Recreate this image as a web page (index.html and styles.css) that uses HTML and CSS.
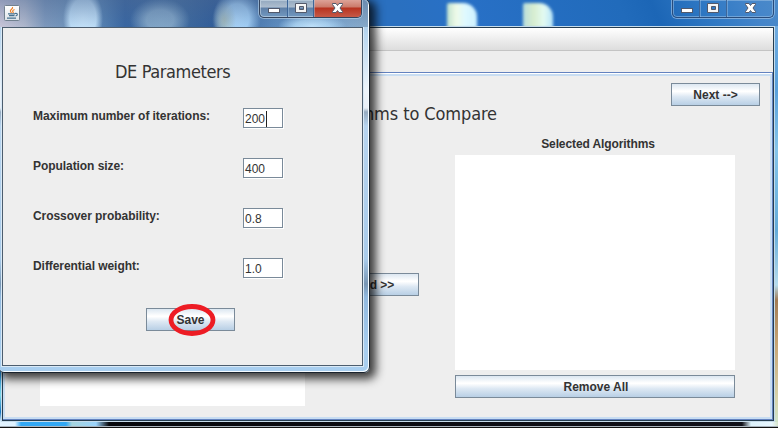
FILE: index.html
```
<!DOCTYPE html>
<html lang="en">
<head>
<meta charset="utf-8">
<title>DE Parameters</title>
<link rel="stylesheet" href="styles.css">
</head>
<body>
<main class="desktop">
  <section class="window main-window">
    <header class="titlebar">
      <i class="glow glow-a"></i><i class="glow glow-b"></i>
      <div class="controls">
        <span><svg width="26" height="17"><rect x="8.5" y="8.5" width="11" height="4" fill="#fff" stroke="#52596b"/></svg></span>
        <span><svg width="26" height="17"><path d="M7.500 3.500h11v9h-11zM11.500 6.500v3h4v-3z" fill="#f5f5f5" fill-rule="evenodd" stroke="#52596b"/></svg></span>
        <span><svg width="46" height="17"><path d="M18.500 3.500h3.500l1.500 2 1.500-2h3.500v1l-2.500 3.500 2.500 3.500v1H25l-1.500-2-1.500 2h-3.500v-1L21 8l-2.500-3.500z" fill="#fff" stroke="#52596b"/></svg></span>
      </div>
    </header>
    <div class="client">
      <div class="menubar"></div>
      <div class="tabstrip"></div>
      <div class="content">
        <div class="left-column"><div class="list left-list"></div></div>
        <div class="middle-column">
          <h1 class="heading compare">Algorithms to Compare</h1>
          <button class="button add">Add &gt;&gt;</button>
        </div>
        <div class="right-column">
          <button class="button next">Next --&gt;</button>
          <div class="list-title">Selected Algorithms</div>
          <div class="list selected"></div>
          <button class="button remove">Remove All</button>
        </div>
      </div>
    </div>
  </section>

  <section class="window dialog">
    <header class="titlebar">
      <svg class="java" width="16" height="16" viewBox="0 0 16 16">
        <defs><linearGradient id="g" x2="0" y2="1"><stop stop-color="#fff"/><stop offset="1" stop-color="#dce3e8"/></linearGradient></defs>
        <rect x=".5" y=".5" width="15" height="15" rx="1" fill="url(#g)" stroke="#72818f"/>
        <path d="M8.500 2c1 2-3 2.500-2 4.500l1 1.500M10.500 4.500c-2 1-2.500 1.500-1 3.500" fill="none" stroke="#f08024" stroke-width="1.200"/>
        <path d="M4 8.800h7M5 10.700h5.500M3 13.200h9M11 8.500c3-.7 3 2 .5 2.500" fill="none" stroke="#46718e" stroke-width="1.200"/>
      </svg>
      <div class="controls">
        <span><svg width="27" height="17"><rect x="8.500" y="8.500" width="11" height="4" fill="#fff" stroke="#52596b"/></svg></span>
        <span><svg width="26" height="17"><path d="M7.500 3.500h11v9h-11zM11.500 6.500v3h4v-3z" fill="#f5f5f5" fill-rule="evenodd" stroke="#52596b"/></svg></span>
        <span class="close"><svg width="47" height="17"><path d="M18.500 3.500h3.500l1.500 2 1.500-2h3.500v1l-2.500 3.500 2.500 3.500v1H25l-1.500-2-1.500 2h-3.500v-1L21 8l-2.500-3.500z" fill="#fff" stroke="#52596b"/></svg></span>
      </div>
    </header>
    <div class="client">
      <h1 class="heading">DE Parameters</h1>
      <form class="form">
        <label>Maximum number of iterations:</label><div class="field">200<i class="caret"></i></div>
        <label>Population size:</label><div class="field">400</div>
        <label>Crossover probability:</label><div class="field">0.8</div>
        <label>Differential weight:</label><div class="field">1.0</div>
      </form>
      <button class="button save">Save
        <svg class="ring" width="48" height="34"><ellipse cx="24" cy="17" rx="21" ry="13.500" fill="none" stroke="#ed1c24" stroke-width="4.800"/></svg>
      </button>
    </div>
  </section>
</main>
</body>
</html>
```

FILE: styles.css
```
* { box-sizing: border-box; }
body { margin: 0; overflow: hidden; font: bold 12px "Liberation Sans", Arial, sans-serif; color: #333; }
.desktop { position: relative; width: 778px; height: 428px; overflow: hidden; background: #0a0b10; }
.window { position: absolute; display: flex; flex-direction: column; }
.titlebar { position: relative; display: flex; flex: none; }
.controls { display: flex; height: 18px; border: 1px solid #294c7c; border-top: 0; border-radius: 0 0 5px 5px; box-shadow: 0 0 0 1px #a6c8e8a0, inset 0 0 0 1px #a6c8e880; }
.controls span { display: block; height: 17px; overflow: hidden; }
.controls span + span { border-left: 1px solid #3d6699; box-shadow: inset 1px 0 #a6c8e870; }
.controls svg { display: block; }

.main-window {
  left: 0; top: 0; width: 778px; height: 428px; padding: 0 4px 7px 2px;
  background:
    linear-gradient(#111, #111) 0 427px / 100% 1px no-repeat,
    linear-gradient(#aab4bd, #aab4bd) 0 426px / 100% 1px no-repeat,
    linear-gradient(90deg, #e3f4ff 0, #dff2ff 15px, #32a8f4 21px, #32a8f4 66px, #a6d4dd 72px, #9ad3fb 96px, #07080c 109px, #111119 742px, #ddf2fb 751px, #e8f7ff 772px, #d7e5cb 778px) 0 422px / 100% 4px no-repeat,
    linear-gradient(#78aee0 0, #58a0db 90px, #85c5ea 150px, #63abd9 230px, #b5dced 285px, #a37c55 300px, #c9a675 345px, #d8d5ad 400px, #cce6d1 428px) 774px 0 / 4px 100% no-repeat,
    linear-gradient(#82b9dd, #278ed4 375px, #79d9eb 395px, #1675c1 412px, #e3f4ff 422px) 0 0 / 2px 100% no-repeat,
    #b9c5d0;
}
.main-window .titlebar {
  height: 26px; margin: 0 -4px 0 -2px; padding-right: 4px; justify-content: flex-end;
  background: linear-gradient(65deg, #2a70c0 370px, #2870c6 430px, #216bbb 570px, #1c66b6 600px, #3079c4 650px, #4485ca 690px, #4b8ac9);
}
.glow { position: absolute; top: 3px; width: 30px; height: 25px; border-radius: 2px 14px 0 0; filter: blur(1.5px); background: linear-gradient(90deg, #bfe1cf, #eefae7 30%, #dff9ff 60%, #cdf0ff); }
.glow-a { left: 447px; }
.glow-b { left: 523px; background: linear-gradient(90deg, #b9dddc, #d7edcf 35%, #e3fbf2 70%, #b4e3f9); }
.main-window .client { position: relative; flex: 1; display: flex; flex-direction: column; margin-top: 1px; border: 1px solid #263d50; background: #eee; box-shadow: 0 0 0 1px #c6dceb; }
.menubar { height: 22px; background: linear-gradient(#fff, #ddd); }
.tabstrip { height: 22px; border-top: 1px solid #c4c4c4; background: #eee; }
.content { flex: 1; display: grid; grid-template-columns: 302px 113px 1fr; border: solid #6382bf; border-width: 1px 1px 1px 0; box-shadow: inset 0 1px #fff, inset 0 3px #c8ddf2, inset -2px 0 #c8ddf2, inset 2px -2px #c8ddf2; }
.left-column { display: flex; align-items: flex-end; padding: 0 0 13px 37px; }
.list { background: #fff; }
.left-list { width: 265px; height: 150px; }
.heading { margin: 0; font: 18px/24px "DejaVu Sans Condensed", "Noto Sans", sans-serif; font-stretch: condensed; white-space: nowrap; letter-spacing: -0.4px; }
.middle-column { display: flex; flex-direction: column; align-items: flex-end; }
.compare { margin: 29px -79px 0 0; letter-spacing: -0.1px; }
.button { display: block; height: 23px; padding: 0; border: 1px solid #7a8a99; color: #333; font: bold 12px/20px "Liberation Sans", Arial, sans-serif; text-align: center; background: linear-gradient(#dce7f1 0, #fff 33%, #fff 36%, #dde8f3 60%, #b8cfe5); }
.add { width: 90px; margin: 147px -1px 0 0; }
.right-column { display: flex; flex-direction: column; width: 280px; margin-left: 37px; }
.next { width: 89px; margin: 10px -25px 0 auto; }
.list-title { margin-top: 30px; height: 19px; line-height: 17px; padding-left: 6px; text-align: center; letter-spacing: -0.1px; }
.selected { height: 215px; }
.remove { width: 280px; margin-top: 5px; padding-left: 2px; }

.dialog {
  left: -2px; top: -2px; width: 372px; height: 375px; padding: 1px 6px 6px 3px;
  border: 1px solid #19232e; border-radius: 7px 7px 6px 6px;
  background: linear-gradient(#93b4d4 0, #b8d6ef 35px, #ecf4fb 90px, #e8eff7 109px, #96abc0 113px, #b7d4ef 127px, #a9cbea 260px, #7896b4 285px, #91b9df 298px, #a8ceef 350px);
  box-shadow: inset -1px -1px #f5fbff, 4px 4px 10px 2px #000000c0;
}
.dialog .titlebar {
  height: 27px; margin: 0 -5px 0 -2px; padding: 0 5px 0 4px; justify-content: space-between; border-radius: 0 5px 0 0;
  background:
    linear-gradient(#49659070, transparent),
    radial-gradient(20px 30px at 83px 18px, #c4e1f8 0, #bcdcf6 65%, transparent),
    radial-gradient(30px 22px at 160px 20px, #82a6c7 0, #7fa3c5 45%, transparent),
    radial-gradient(12px 20px at 224px 20px, #a0b7ba, transparent),
    radial-gradient(24px 28px at 237px 18px, #a8d2f6 0, #a0cdf4 50%, transparent),
    radial-gradient(34px 12px at 312px 26px, #bee1fb 0, #a6cfef 50%, transparent),
    linear-gradient(90deg, #c8c5d8, #aeb7cc 25px, #7d98bc 45px, #638eb9 90px, #3966a1 125px, #426d9f 175px, #315d99 215px, #5b8abd 275px, #7da8d2 330px, #87a9c8);
}
.java { margin-top: 5px; }
.dialog .controls { width: 103px; margin-right: 1px; background: linear-gradient(#92a8bf 0, #adbdce 7px, #5f80a7 8px, #7198c0); border-color: #34445d; box-shadow: 0 0 0 1px #c2d9ec90, inset 0 0 0 1px #d7e6f080; }
.dialog .controls .close { background: linear-gradient(#dda297 0, #cb7b6b 7px, #b73320 8px, #c65947); border-radius: 0 0 4px; }
.dialog .client { flex: 1; display: flex; flex-direction: column; align-items: flex-start; border: 1px solid #4c5d6e; box-shadow: 0 0 0 1px #d9e9f6; background: #eee; padding: 32px 0 0 30px; }
.dialog .heading { margin-left: 82px; }
.form { display: grid; grid-template-columns: 210px 40px; grid-auto-rows: 20px; row-gap: 30px; margin-top: 24px; }
.form label { line-height: 16px; white-space: nowrap; letter-spacing: -0.06px; }
.field { height: 20px; border: 1px solid #7a8a99; padding-left: 1px; background: #fff; box-shadow: 1px 1px #fff; font-weight: normal; line-height: 21px; display: flex; }
.caret { width: 1px; height: 16px; margin: 2px 0 0 1px; background: #222; }
.save { position: relative; width: 89px; margin: 30px 0 0 113px; }
.ring { position: absolute; left: 21px; top: -6px; }
```
